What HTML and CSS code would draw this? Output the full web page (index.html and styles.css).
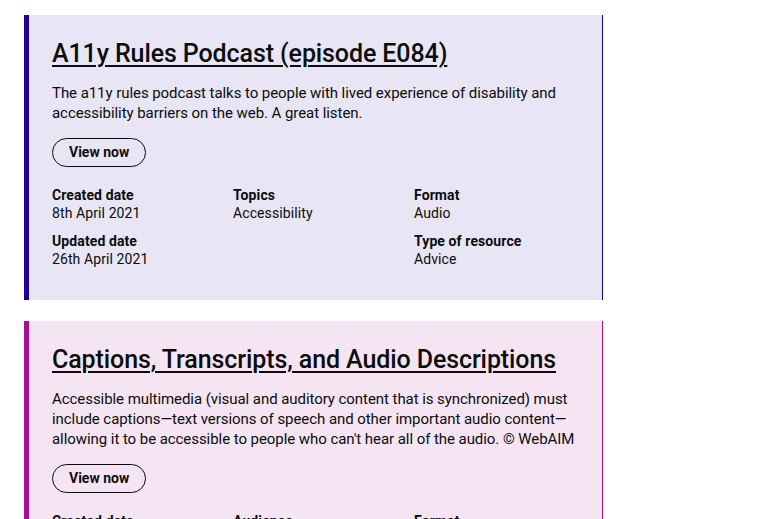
FILE: index.html
```html
<!DOCTYPE html>
<html>
<head>
<meta charset="utf-8">
<link rel="stylesheet" href="styles.css">
</head>
<body>
<div class="list">
  <article class="card card-blue">
    <h2 class="title"><a href="#">A11y Rules Podcast (episode E084)</a></h2>
    <p class="desc">The a11y rules podcast talks to people with lived experience of disability and accessibility barriers on the web. A great listen.</p>
    <a class="btn" href="#">View now</a>
    <div class="meta">
      <div class="item"><div class="label">Created date</div><div class="value">8th April 2021</div></div>
      <div class="item"><div class="label">Topics</div><div class="value">Accessibility</div></div>
      <div class="item"><div class="label">Format</div><div class="value">Audio</div></div>
      <div class="item"><div class="label">Updated date</div><div class="value">26th April 2021</div></div>
      <div class="item"></div>
      <div class="item"><div class="label">Type of resource</div><div class="value">Advice</div></div>
    </div>
  </article>
  <article class="card card-purple">
    <h2 class="title"><a href="#">Captions, Transcripts, and Audio Descriptions</a></h2>
    <p class="desc">Accessible multimedia (visual and auditory content that is synchronized) must include captions—text versions of speech and other important audio content—allowing it to be accessible to people who can't hear all of the audio. © WebAIM</p>
    <a class="btn" href="#">View now</a>
    <div class="meta">
      <div class="item"><div class="label">Created date</div><div class="value">8th April 2021</div></div>
      <div class="item"><div class="label">Audience</div><div class="value">Everyone</div></div>
      <div class="item"><div class="label">Format</div><div class="value">Guide</div></div>
    </div>
  </article>
</div>
</body>
</html>
```
FILE: styles.css
```css
html, body {
  margin: 0;
  padding: 0;
  background: #ffffff;
}
body {
  font-family: Roboto, "Liberation Sans", sans-serif;
  color: #0b0c0c;
}
.list {
  display: flex;
  flex-direction: column;
  gap: 21px;
  padding: 15px 0 0 24px;
  width: 579px;
}
.card {
  box-sizing: border-box;
  padding: 22px 20px 32px 23px;
  border-left: 5px solid #1e0096;
  border-right: 1px solid #1e0096;
  background: #e8e6f5;
}
.card-purple {
  border-left-color: #a3138c;
  border-right-color: #a3138c;
  background: #f5e5f3;
}
.title {
  margin: 0 0 12px;
  font-size: 25px;
  line-height: 34px;
  font-weight: 500;
  letter-spacing: -0.1px;
}
.title a {
  color: #0b0c0c;
  text-decoration: underline;
  text-decoration-thickness: 2px;
  text-underline-offset: 3px;
}
.desc {
  margin: 0 0 15px;
  font-size: 15px;
  line-height: 20px;
  letter-spacing: -0.06px;
}
.btn {
  display: inline-block;
  box-sizing: border-box;
  height: 29px;
  line-height: 27px;
  padding: 0 16px;
  border: 1px solid #0b0c0c;
  border-radius: 15px;
  font-size: 14px;
  font-weight: 700;
  color: #0b0c0c;
  text-decoration: none;
}
.meta {
  display: grid;
  grid-template-columns: 181px 181px 1fr;
  row-gap: 10px;
  margin-top: 19px;
  font-size: 14px;
  line-height: 18px;
  letter-spacing: 0.1px;
}
.label {
  font-weight: 700;
}
```
